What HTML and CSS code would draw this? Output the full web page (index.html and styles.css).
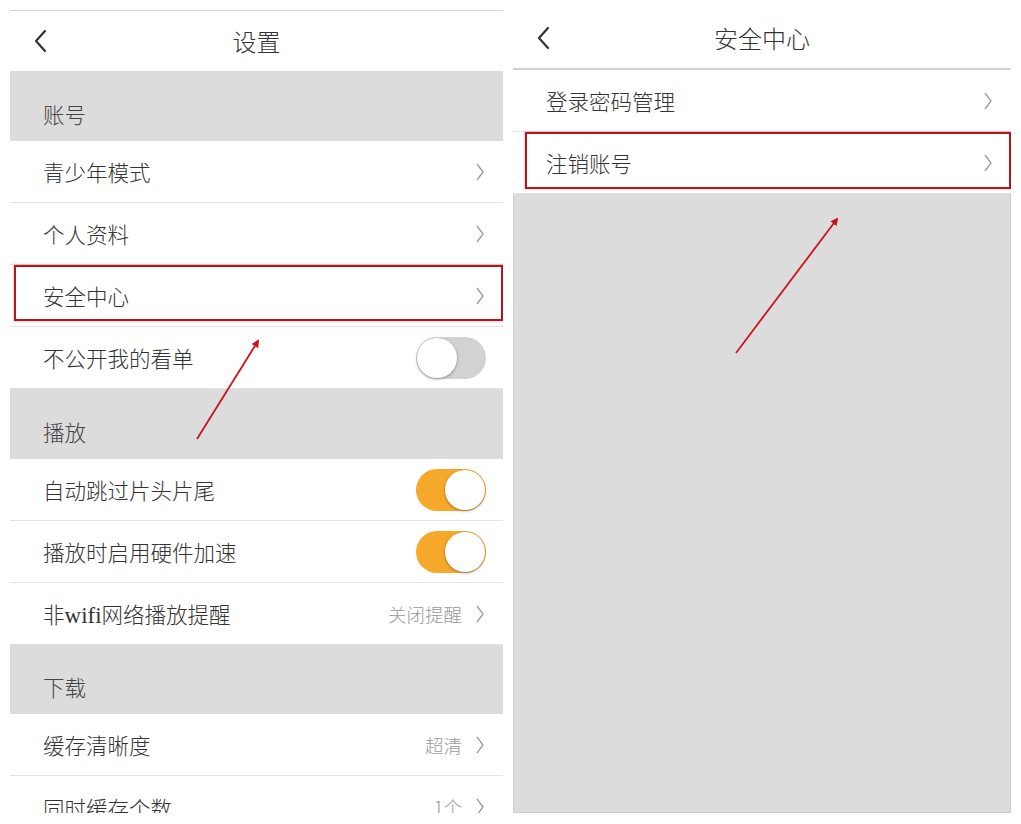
FILE: index.html
```html
<!DOCTYPE html>
<html lang="zh">
<head>
<meta charset="utf-8">
<title>设置</title>
<link rel="stylesheet" href="styles.css">
</head>
<body>
<div class="page">
  <div class="panel left">
    <div class="header">
      <svg class="back" width="14" height="24" viewBox="0 0 14 24"><path d="M11 2 L2 12 L11 22" fill="none" stroke="#333" stroke-width="2.2" stroke-linecap="round" stroke-linejoin="round"/></svg>
      <div class="title">设置</div>
    </div>
    <div class="section">账号</div>
    <div class="row"><span class="label">青少年模式</span><span class="right"><svg class="chev" width="10" height="20" viewBox="0 0 10 20"><path d="M2 2 L8 10 L2 18" fill="none" stroke="#9a9a9a" stroke-width="1.3"/></svg></span></div>
    <div class="row"><span class="label">个人资料</span><span class="right"><svg class="chev" width="10" height="20" viewBox="0 0 10 20"><path d="M2 2 L8 10 L2 18" fill="none" stroke="#9a9a9a" stroke-width="1.3"/></svg></span></div>
    <div class="row"><span class="label">安全中心</span><span class="right"><svg class="chev" width="10" height="20" viewBox="0 0 10 20"><path d="M2 2 L8 10 L2 18" fill="none" stroke="#9a9a9a" stroke-width="1.3"/></svg></span><div class="mark mark-left"></div></div>
    <div class="row"><span class="label">不公开我的看单</span><span class="right"><span class="toggle off"><span class="knob"></span></span></span></div>
    <div class="section">播放</div>
    <div class="row"><span class="label">自动跳过片头片尾</span><span class="right"><span class="toggle on"><span class="knob"></span></span></span></div>
    <div class="row"><span class="label">播放时启用硬件加速</span><span class="right"><span class="toggle on"><span class="knob"></span></span></span></div>
    <div class="row"><span class="label">非<span class="latin">wifi</span>网络播放提醒</span><span class="right"><span class="value">关闭提醒</span><svg class="chev" width="10" height="20" viewBox="0 0 10 20"><path d="M2 2 L8 10 L2 18" fill="none" stroke="#9a9a9a" stroke-width="1.3"/></svg></span></div>
    <div class="section short">下载</div>
    <div class="row"><span class="label">缓存清晰度</span><span class="right"><span class="value">超清</span><svg class="chev" width="10" height="20" viewBox="0 0 10 20"><path d="M2 2 L8 10 L2 18" fill="none" stroke="#9a9a9a" stroke-width="1.3"/></svg></span></div>
    <div class="row last"><span class="label">同时缓存个数</span><span class="right"><span class="value">1个</span><svg class="chev" width="10" height="20" viewBox="0 0 10 20"><path d="M2 2 L8 10 L2 18" fill="none" stroke="#9a9a9a" stroke-width="1.3"/></svg></span></div>
  </div>
  <div class="panel rightpanel">
    <div class="header plain">
      <svg class="back" width="14" height="24" viewBox="0 0 14 24"><path d="M11 2 L2 12 L11 22" fill="none" stroke="#333" stroke-width="2.2" stroke-linecap="round" stroke-linejoin="round"/></svg>
      <div class="title">安全中心</div>
    </div>
    <div class="row"><span class="label">登录密码管理</span><span class="right"><svg class="chev" width="10" height="20" viewBox="0 0 10 20"><path d="M2 2 L8 10 L2 18" fill="none" stroke="#9a9a9a" stroke-width="1.3"/></svg></span></div>
    <div class="row"><span class="label">注销账号</span><span class="right"><svg class="chev" width="10" height="20" viewBox="0 0 10 20"><path d="M2 2 L8 10 L2 18" fill="none" stroke="#9a9a9a" stroke-width="1.3"/></svg></span><div class="mark mark-right"></div></div>
    <div class="fill"></div>
  </div>
  <svg class="arrows" width="1021" height="824" viewBox="0 0 1021 824">
    <defs>
      <marker id="ah" markerWidth="8" markerHeight="8" refX="6" refY="4" orient="auto" markerUnits="userSpaceOnUse">
        <path d="M0 0 L8 4 L0 8 Z" fill="#c8161d"/>
      </marker>
    </defs>
    <line x1="197" y1="439" x2="258" y2="341" stroke="#c8161d" stroke-width="1.8" marker-end="url(#ah)"/>
    <line x1="736" y1="353" x2="837" y2="219" stroke="#c8161d" stroke-width="1.8" marker-end="url(#ah)"/>
  </svg>
</div>
</body>
</html>
```

FILE: styles.css
```css
* { box-sizing: border-box; }
html, body { margin: 0; padding: 0; background: #fff; }
body {
  font-family: "Noto Sans CJK SC", "Noto Sans", sans-serif;
  font-weight: 300;
  color: #333;
  width: 1021px;
  height: 824px;
  overflow: hidden;
}
.page {
  position: relative;
  display: flex;
  gap: 10px;
  padding-left: 10px;
  height: 824px;
}
.panel {
  display: flex;
  flex-direction: column;
  height: 813px;
  overflow: hidden;
  background: #fff;
}
.left {
  width: 493px;
  margin-top: 10px;
  height: 803px;
  border-top: 1px solid #d6d6d6;
}
.rightpanel {
  width: 498px;
  margin-top: 8px;
  height: 805px;
}
.header {
  position: relative;
  height: 60px;
  flex: none;
  display: flex;
  align-items: center;
  justify-content: center;
}
.header.plain {
  height: 62px;
  border-bottom: 2px solid #d2d2d2;
}
.back {
  position: absolute;
  left: 24px;
  top: 18px;
}
.title {
  font-size: 24px;
  line-height: 1;
  color: #333;
}
.section {
  height: 70px;
  flex: none;
  background: #dcdcdc;
  font-size: 21.5px;
  color: #444;
  padding-left: 33px;
  display: flex;
  align-items: flex-end;
  padding-bottom: 12px;
}
.section.short { height: 69px; }
.row {
  position: relative;
  height: 62px;
  flex: none;
  display: flex;
  align-items: center;
  justify-content: space-between;
  padding: 0 18px 0 33px;
  border-bottom: 1px solid #e3e3e3;
  background: #fff;
}
.row.last { border-bottom: none; }
.label {
  font-size: 21.5px;
  color: #333;
}
.latin {
  font-family: "Liberation Serif", "DejaVu Serif", serif;
  font-size: 23px;
  font-weight: 400;
}
.right {
  display: flex;
  align-items: center;
  gap: 13px;
}
.value {
  font-size: 18.5px;
  color: #999;
}
.chev { display: block; }
.toggle {
  position: relative;
  display: block;
  width: 70px;
  height: 42px;
  border-radius: 21px;
  margin-right: -1px;
}
.toggle.off { background: #d2d2d2; }
.toggle.on { background: #f6a82a; }
.knob {
  position: absolute;
  top: 1px;
  width: 40px;
  height: 40px;
  border-radius: 50%;
  background: #fff;
  box-shadow: 0 1px 3px rgba(0,0,0,0.35);
}
.toggle.off .knob { left: 1px; }
.toggle.on .knob { right: 1px; }
.mark {
  position: absolute;
  top: 0;
  bottom: 5px;
  right: 0;
  border: 2px solid #b3161c;
  box-shadow: 0 0 2px rgba(179,22,28,0.5);
  pointer-events: none;
}
.mark-left { left: 4px; }
.mark-right { left: 12px; bottom: 4px; }
.fill {
  flex: 1;
  background: #dcdcdc;
  border: 1px solid #cfcfcf;
  border-top: none;
}
.arrows {
  position: absolute;
  left: 0;
  top: 0;
  pointer-events: none;
}
```
